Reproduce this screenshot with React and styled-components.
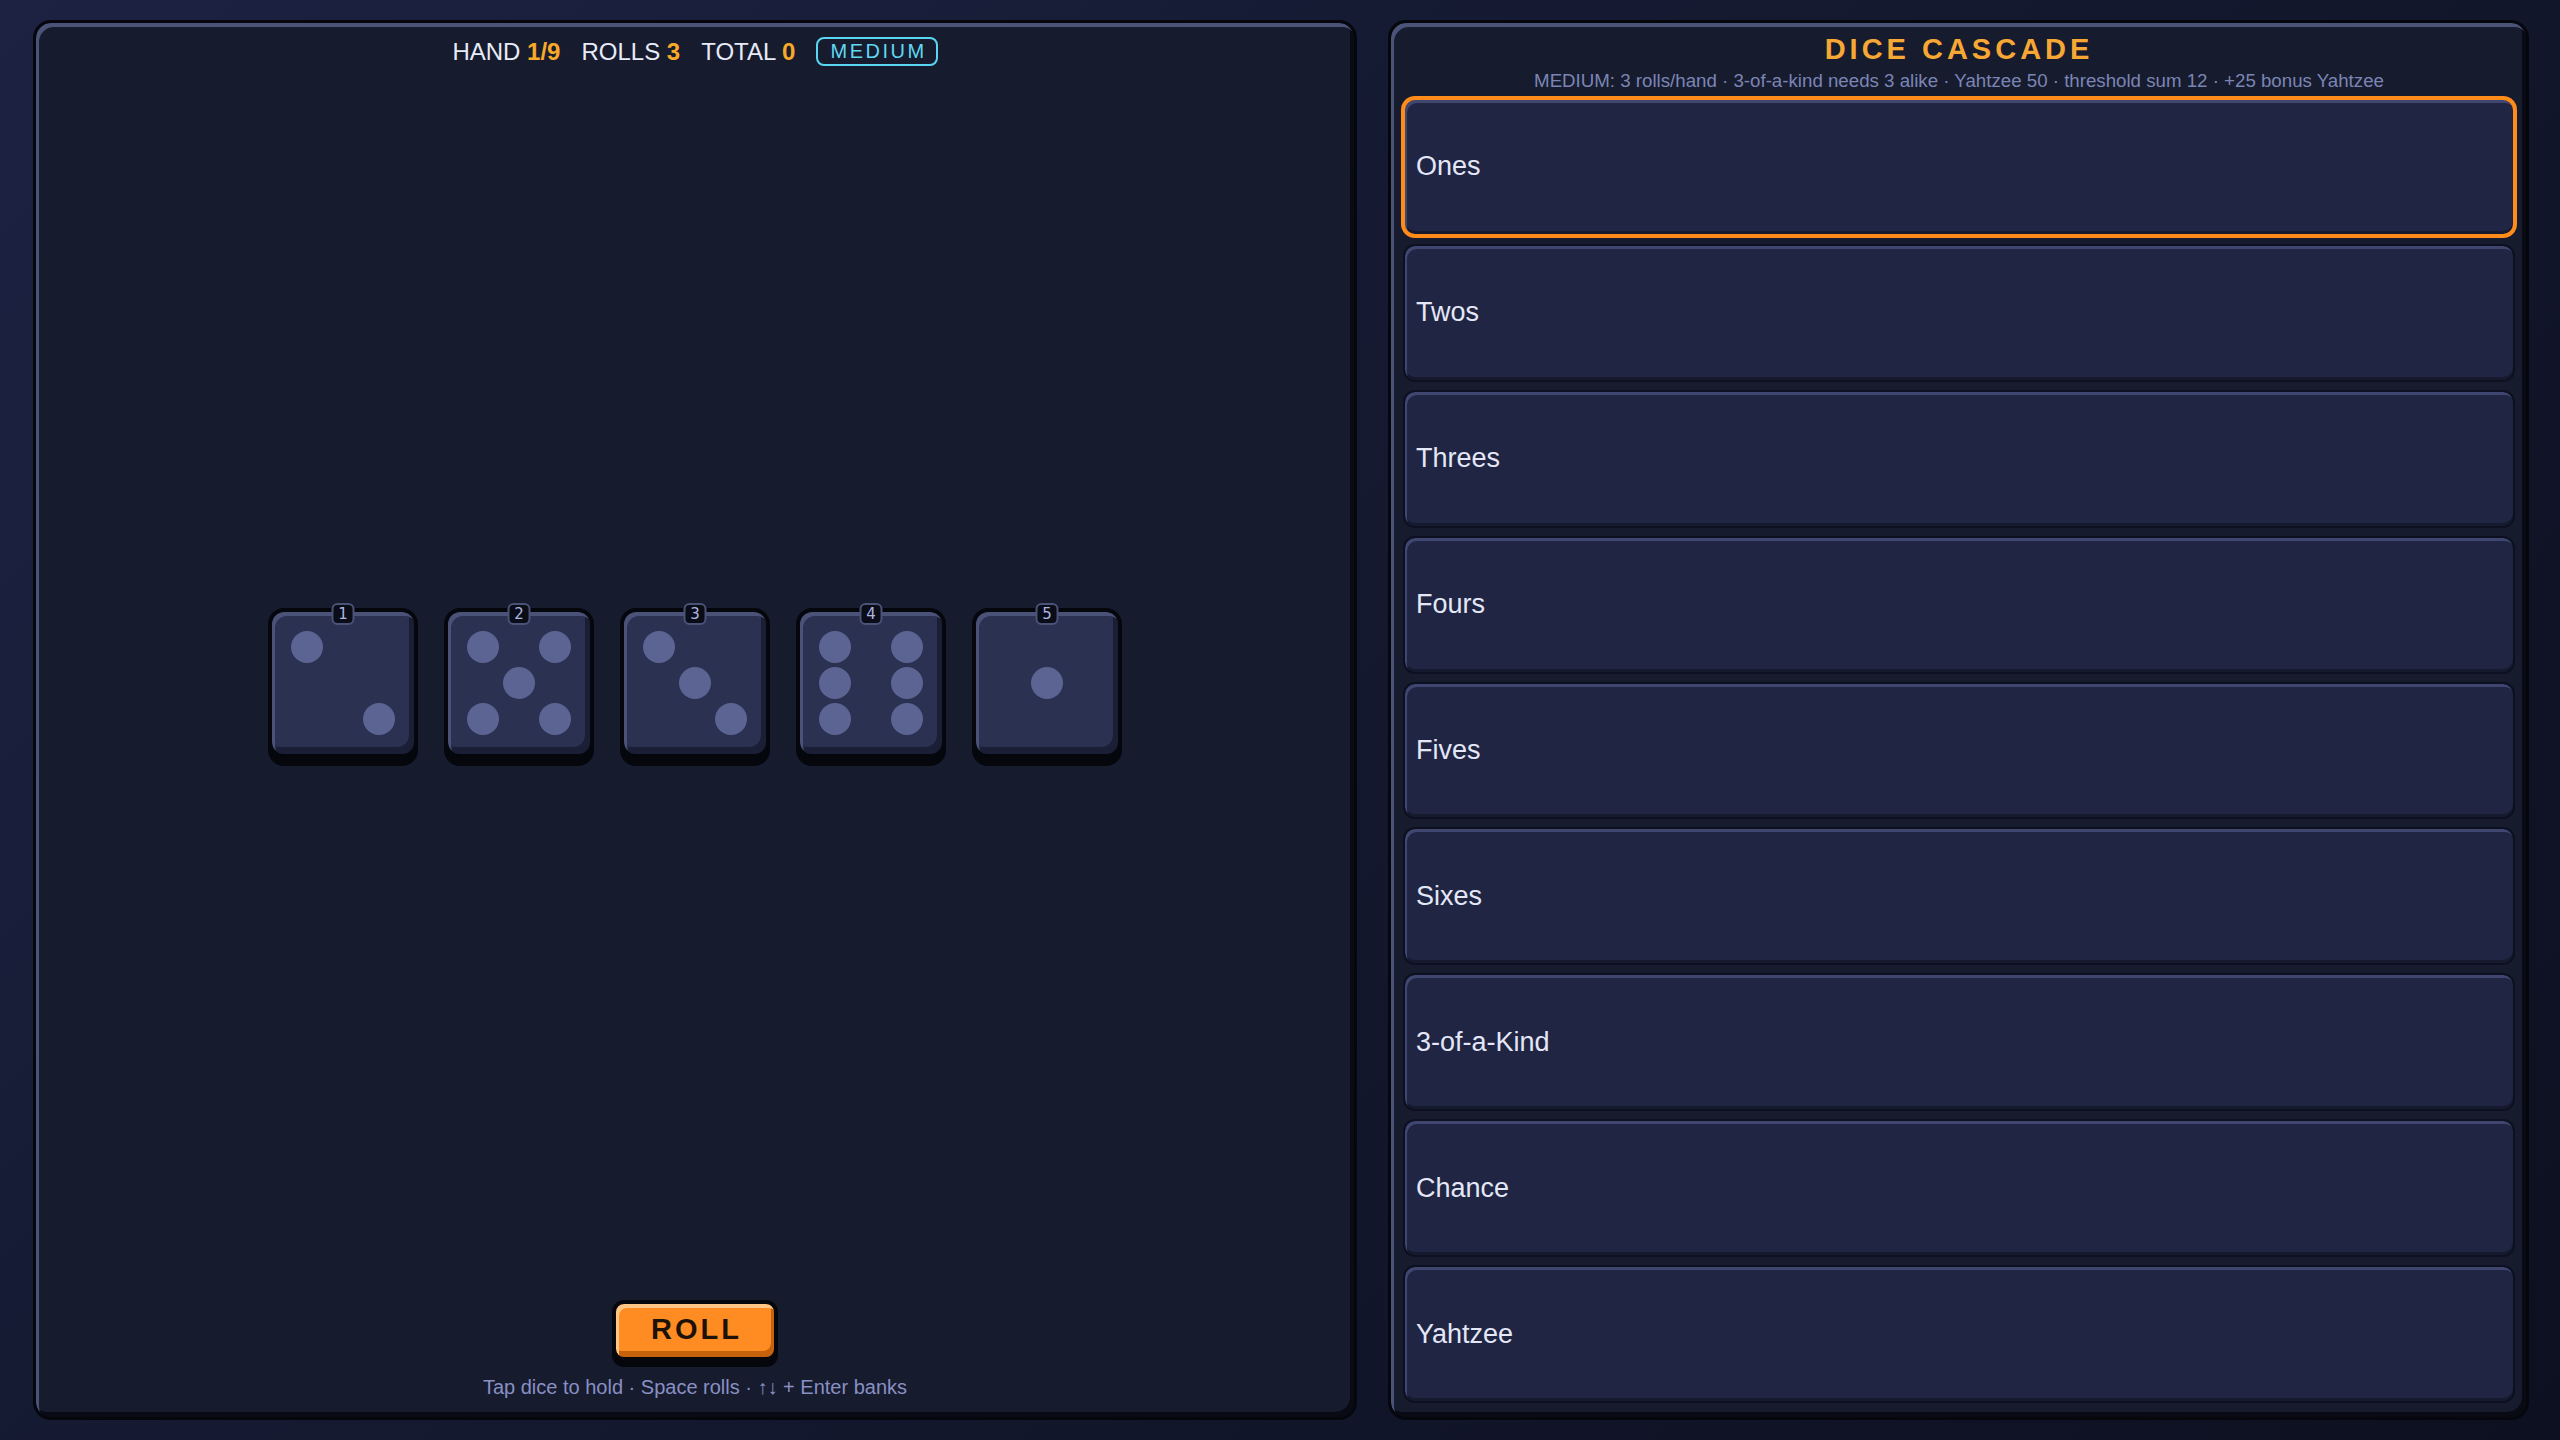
import styled, { createGlobalStyle, css } from 'styled-components';

const DICE = [2, 5, 3, 6, 1];

// which cells of the 3x3 grid carry a pip, per face value
const PIP_MAP = {
  1: [4],
  2: [0, 8],
  3: [0, 4, 8],
  4: [0, 2, 6, 8],
  5: [0, 2, 4, 6, 8],
  6: [0, 2, 3, 5, 6, 8],
};

const CATEGORIES = ['Ones', 'Twos', 'Threes', 'Fours', 'Fives', 'Sixes', '3-of-a-Kind', 'Chance', 'Yahtzee'];

const App = () => {
  return (
    <>
      <GlobalStyle />
      <Page>
        <PlayPanel>
          <Hud>
            <HudItem>
              HAND <HudValue>1/9</HudValue>
            </HudItem>
            <HudItem>
              ROLLS <HudValue>3</HudValue>
            </HudItem>
            <HudItem>
              TOTAL <HudValue>0</HudValue>
            </HudItem>
            <Difficulty>MEDIUM</Difficulty>
          </Hud>

          <DiceArea>
            <DiceRow>
              {DICE.map((value, i) => (
                <Die key={i}>
                  <DieIndex>{i + 1}</DieIndex>
                  <PipGrid>
                    {Array.from({ length: 9 }, (_, cell) => (
                      <Pip key={cell} $on={PIP_MAP[value].includes(cell)} />
                    ))}
                  </PipGrid>
                </Die>
              ))}
            </DiceRow>
          </DiceArea>

          <Footer>
            <RollButton type="button">ROLL</RollButton>
            <Hint>Tap dice to hold · Space rolls · ↑↓ + Enter banks</Hint>
          </Footer>
        </PlayPanel>

        <ScorePanel>
          <Header>
            <Title>DICE CASCADE</Title>
            <Rules>
              MEDIUM: 3 rolls/hand · 3-of-a-kind needs 3 alike · Yahtzee 50 · threshold sum 12 · +25 bonus Yahtzee
            </Rules>
          </Header>
          <CategoryList>
            {CATEGORIES.map((name, i) => (
              <Category key={name} $active={i === 0}>
                {name}
              </Category>
            ))}
          </CategoryList>
        </ScorePanel>
      </Page>
    </>
  );
};

// Estilos
const GlobalStyle = createGlobalStyle`
  html, body {
    margin: 0;
    height: 100%;
  }

  body {
    background: linear-gradient(135deg, #1d2243 0%, #151a32 40%, #0d1020 100%);
    font-family: "Liberation Sans", Arial, sans-serif;
    color: #e6e9f8;
  }

  #root {
    height: 100%;
  }
`;

const Page = styled.div`
  box-sizing: border-box;
  height: 100vh;
  display: flex;
  gap: 31px;
  padding: 20px 31px 20px 33px;
`;

const panel = css`
  box-sizing: border-box;
  height: 100%;
  display: flex;
  flex-direction: column;
  background: #171b2e;
  border: 3px solid #05070d;
  border-radius: 18px;
  box-shadow:
    inset 3px 4px 0 #4b5378,
    inset -4px -5px 0 #080a14;
`;

const PlayPanel = styled.section`
  ${panel};
  flex: 0 0 1324px;
  padding: 14px 20px 18px;
`;

const ScorePanel = styled.section`
  ${panel};
  flex: 1;
  padding: 10px 11px 14px 12px;
`;

const Hud = styled.div`
  display: flex;
  justify-content: center;
  align-items: center;
  gap: 21px;
  font-size: 24px;
  line-height: 29px;
  color: #e8ebf8;
`;

const HudItem = styled.span`
  white-space: nowrap;
`;

const HudValue = styled.b`
  color: #f7a928;
  font-weight: 700;
`;

const Difficulty = styled.span`
  box-sizing: border-box;
  height: 29px;
  padding: 0 9px 0 12px;
  border: 2px solid #5ad6f2;
  border-radius: 8px;
  font-size: 20px;
  line-height: 25px;
  letter-spacing: 2.5px;
  color: #5fd8f2;
`;

const DiceArea = styled.div`
  flex: 1;
  display: flex;
  align-items: center;
  justify-content: center;
`;

const DiceRow = styled.div`
  display: flex;
  gap: 26px;
`;

const Die = styled.div`
  position: relative;
  box-sizing: border-box;
  width: 150px;
  height: 150px;
  display: flex;
  align-items: center;
  justify-content: center;
  background: #2b3150;
  border: 4px solid #05070d;
  border-radius: 16px;
  box-shadow:
    0 8px 0 #05070d,
    inset 3px 4px 0 #4a5278,
    inset -5px -7px 0 #1b1f35;
`;

const DieIndex = styled.span`
  position: absolute;
  top: -9px;
  left: 50%;
  transform: translateX(-50%);
  box-sizing: border-box;
  width: 23px;
  height: 22px;
  display: flex;
  align-items: center;
  justify-content: center;
  background: #0a0d18;
  border: 2px solid #4a5278;
  border-radius: 6px;
  font-family: "DejaVu Sans", sans-serif;
  font-size: 15px;
  color: #aeb5e0;
`;

const PipGrid = styled.div`
  display: grid;
  grid-template-columns: repeat(3, 32px);
  grid-template-rows: repeat(3, 32px);
  gap: 4px;
`;

const Pip = styled.span`
  width: 32px;
  height: 32px;
  border-radius: 50%;
  background: ${(props) => (props.$on ? '#5b6492' : 'transparent')};
`;

const Footer = styled.div`
  display: flex;
  flex-direction: column;
  align-items: center;
  gap: 15px;
`;

const RollButton = styled.button`
  box-sizing: border-box;
  width: 166px;
  height: 61px;
  background: #ff8c22;
  border: 4px solid #05070d;
  border-radius: 12px;
  box-shadow:
    0 6px 0 #05070d,
    inset 3px 4px 0 #ffc785,
    inset -3px -6px 0 #c7620c;
  font-family: "Liberation Sans", Arial, sans-serif;
  font-size: 29px;
  font-weight: 700;
  letter-spacing: 3px;
  padding: 0 0 2px 3px;
  color: #1c1208;
  cursor: pointer;
`;

const Hint = styled.p`
  margin: 0;
  font-size: 20px;
  line-height: 23px;
  color: #8890c4;
`;

const Header = styled.header`
  text-align: center;
`;

const Title = styled.h1`
  margin: 0;
  font-size: 29px;
  line-height: 33px;
  font-weight: 700;
  letter-spacing: 4px;
  color: #f7a733;
`;

const Rules = styled.p`
  margin: 4px 0 0;
  font-size: 18.7px;
  line-height: 21px;
  color: #7b85b5;
`;

const CategoryList = styled.div`
  flex: 1;
  display: flex;
  flex-direction: column;
  gap: 8px;
  margin-top: 7px;
`;

const Category = styled.div`
  flex: 1;
  display: flex;
  align-items: center;
  padding-left: 11px;
  background: #1f2542;
  border: 2px solid ${(props) => (props.$active ? '#ff8c1a' : '#0d1020')};
  border-radius: 12px;
  box-shadow:
    ${(props) => (props.$active ? '0 0 0 2px #ff8c1a,' : '')}
    inset 2px 3px 0 #3f4770,
    inset 0 -3px 0 #161a2e;
  font-size: 27px;
  color: #e4e7f7;
`;

export default App;
